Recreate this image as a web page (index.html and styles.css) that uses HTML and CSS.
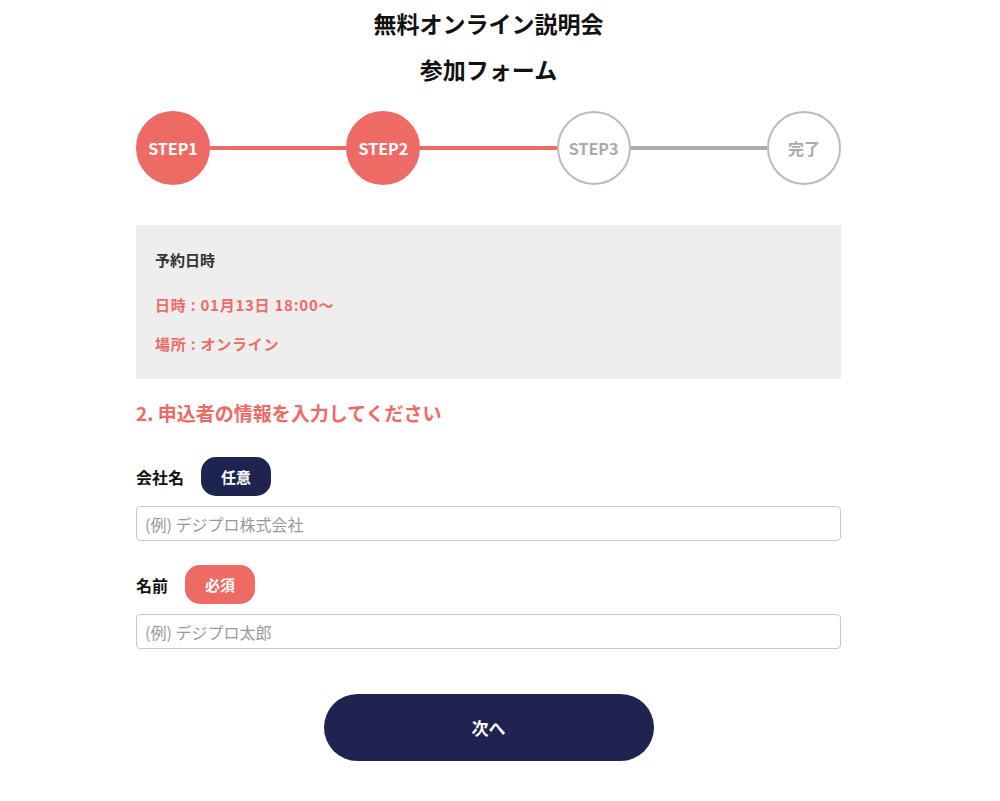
FILE: index.html
```html
<!DOCTYPE html>
<html lang="ja">
<head>
	<meta charset="utf-8">
	<title>無料オンライン説明会 参加フォーム</title>
	<link rel="stylesheet" href="styles.css">
</head>
<body>
	<div class="wrap">
		<!--タイトル-->
		<h1 class="title">無料オンライン説明会<br>参加フォーム</h1>

		<!--ステップ-->
		<ol class="steps">
			<li class="step done">STEP1</li>
			<li class="bar done"></li>
			<li class="step done">STEP2</li>
			<li class="bar done"></li>
			<li class="step">STEP3</li>
			<li class="bar"></li>
			<li class="step">完了</li>
		</ol>

		<!--予約情報-->
		<div class="info">
			<p class="info-head">予約日時</p>
			<p class="info-red">日時 : 01月13日 18:00〜</p>
			<p class="info-red">場所 : オンライン</p>
		</div>

		<h2 class="sub">2. 申込者の情報を入力してください</h2>

		<!--フォーム-->
		<div class="field">
			<div class="label">会社名<span class="tag tag-any">任意</span></div>
			<input class="input" type="text" placeholder="(例) デジプロ株式会社">
		</div>
		<div class="field">
			<div class="label">名前<span class="tag tag-must">必須</span></div>
			<input class="input" type="text" placeholder="(例) デジプロ太郎">
		</div>

		<div class="btn-area">
			<button class="btn" type="button">次へ</button>
		</div>
	</div>
</body>
</html>
```

FILE: styles.css
```css
*{
    margin: 0;
    padding: 0;
    box-sizing: border-box;
    list-style: none;
}

body{
    font-family: "Noto Sans CJK JP", "Noto Sans", sans-serif;
    color: #222;
    background-color: #fff;
}

.wrap{
    width: 705px;
    margin-left: 136px;
}

.title{
    text-align: center;
    font-size: 23px;
    font-weight: bold;
    line-height: 46px;
    color: #111;
}

.steps{
    display: flex;
    align-items: center;
    margin-top: 19px;
}

.step{
    width: 74px;
    height: 74px;
    flex: none;
    border-radius: 50%;
    border: 2px solid #bbb;
    display: flex;
    align-items: center;
    justify-content: center;
    font-size: 16px;
    font-weight: bold;
    color: #aaa;
    background-color: #fff;
}

.step.done{
    background-color: #ee6a65;
    border-color: #ee6a65;
    color: #fff;
}

.bar{
    flex: 1;
    height: 4px;
    background-color: #aaa;
}

.bar.done{
    background-color: #ee6a65;
}

.info{
    margin-top: 40px;
    background-color: #eeeeee;
    padding: 25px 19px 16px;
    height: 154px;
}

.info p{
    font-size: 15px;
    font-weight: bold;
    line-height: 20px;
}

.info-head{
    color: #333;
    margin-bottom: 25px;
}

.info-red{
    color: #ee6a65;
    margin-bottom: 19px;
    letter-spacing: 0.05em;
}

.sub{
    margin-top: 21px;
    font-size: 19px;
    font-weight: bold;
    color: #ee6a65;
    line-height: 26px;
}

.field{
    margin-top: 31px;
}

.field + .field{
    margin-top: 24px;
}

.label{
    display: flex;
    align-items: center;
    font-size: 16px;
    font-weight: bold;
    color: #111;
}

.tag{
    display: inline-flex;
    align-items: center;
    justify-content: center;
    width: 70px;
    height: 39px;
    margin-left: 17px;
    border-radius: 15px;
    color: #fff;
    font-size: 15px;
    font-weight: bold;
}

.tag-any{
    background-color: #1e2350;
}

.tag-must{
    background-color: #ee6a65;
}

.input{
    display: block;
    width: 100%;
    height: 35px;
    margin-top: 10px;
    border: 1px solid #c8c8c8;
    border-radius: 4px;
    padding: 0 8px;
    font-family: "Noto Sans CJK JP", "Noto Sans", sans-serif;
    font-size: 16px;
}

.input::placeholder{
    color: #999;
}

.btn-area{
    display: flex;
    justify-content: center;
    margin-top: 45px;
}

.btn{
    width: 330px;
    height: 67px;
    border: 0;
    border-radius: 34px;
    background-color: #1e2350;
    color: #fff;
    font-family: "Noto Sans CJK JP", "Noto Sans", sans-serif;
    font-size: 17px;
    font-weight: bold;
    cursor: pointer;
}
```
